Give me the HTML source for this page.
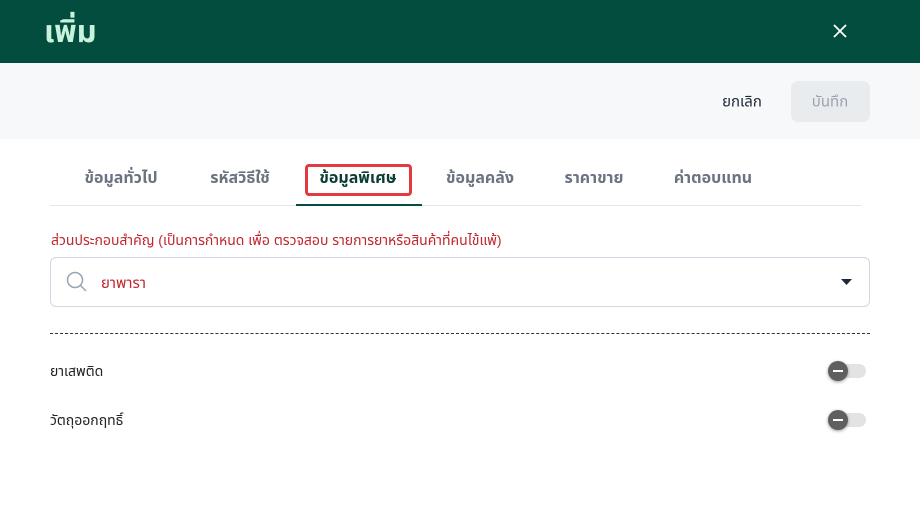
<!DOCTYPE html>
<html><head><meta charset="utf-8"><style>
*{margin:0;padding:0;box-sizing:border-box}
body{width:920px;height:505px;background:#fff;font-family:"Liberation Sans","Noto Sans Thai","Tlwg Typist",sans-serif;position:relative;overflow:hidden}
.a{position:absolute}
.hdr{left:0;top:0;width:920px;height:63px;background:#024d3e}
.title{left:44px;top:14px;font-size:31px;font-weight:bold;color:#c9f2dc;line-height:36px}
.band{left:0;top:63px;width:920px;height:76px;background:#f7f8fa}
.tab{top:169px;font-size:16px;color:#6b7280;font-weight:bold;transform:translateX(-50%);white-space:nowrap;line-height:20px}
.c{transform:translate(-50%,-50%);white-space:nowrap}
.tog{width:36px;height:14px;border-radius:7px;background:#e3e3e3}
.knob{width:20px;height:20px;border-radius:50%;background:#5f5f5f;box-shadow:0 1px 3px rgba(0,0,0,.4)}
.knob:after{content:"";position:absolute;left:5px;top:9px;width:10px;height:2px;background:#fff}
</style></head><body>
<div class="a hdr"></div>
<div class="a title">เพิ่ม</div>
<svg class="a" style="left:832px;top:23px" width="16" height="16" viewBox="0 0 16 16"><path d="M2 2L14 14M14 2L2 14" stroke="#fff" stroke-width="1.8"/></svg>
<div class="a band"></div>
<div class="a c" style="left:742px;top:102px;font-size:15px;color:#1f2937">ยกเลิก</div>
<div class="a" style="left:791px;top:81px;width:79px;height:41px;border-radius:7px;background:#e9ecef"></div>
<div class="a c" style="left:830px;top:102px;font-size:15px;color:#9aa3ad">บันทึก</div>
<div class="a" style="left:50px;top:205px;width:811px;height:1px;background:#e3e6ea"></div>
<div class="a" style="left:296px;top:204px;width:126px;height:2px;background:#024d3e"></div>
<div class="a" style="left:305px;top:164px;width:107px;height:32px;border:3px solid #e33a3f;border-radius:4px"></div>
<div class="a tab" style="left:121px">ข้อมูลทั่วไป</div>
<div class="a tab" style="left:240px">รหัสวิธีใช้</div>
<div class="a tab" style="left:358px;color:#0b3d33">ข้อมูลพิเศษ</div>
<div class="a tab" style="left:480px">ข้อมูลคลัง</div>
<div class="a tab" style="left:594px">ราคาขาย</div>
<div class="a tab" style="left:713px">ค่าตอบแทน</div>
<div class="a" style="left:51px;top:231px;font-size:14px;color:#c0262d;white-space:nowrap">ส่วนประกอบสำคัญ (เป็นการกำหนด เพื่อ ตรวจสอบ รายการยาหรือสินค้าที่คนไข้แพ้)</div>
<div class="a" style="left:50px;top:257px;width:820px;height:50px;border:1px solid #cfd8e3;border-radius:6px"></div>
<svg class="a" style="left:66px;top:271px" width="22" height="22" viewBox="0 0 22 22"><circle cx="9" cy="9" r="7.5" fill="none" stroke="#9aa5b1" stroke-width="1.5"/><path d="M14.5 14.5L20 20" stroke="#9aa5b1" stroke-width="1.5"/></svg>
<div class="a" style="left:101px;top:272px;font-size:15px;color:#c0262d">ยาพารา</div>
<svg class="a" style="left:841px;top:279px" width="11" height="6"><path d="M0 0H11L5.5 6Z" fill="#1f2937"/></svg>
<div class="a" style="left:50px;top:333px;width:820px;border-top:1px dashed #333"></div>
<div class="a" style="left:50px;top:362px;font-size:14px;color:#222">ยาเสพติด</div>
<div class="a" style="left:50px;top:411px;font-size:14px;color:#222">วัตถุออกฤทธิ์</div>
<div class="a tog" style="left:830px;top:364px"></div><div class="a knob" style="left:828px;top:361px"></div>
<div class="a tog" style="left:830px;top:413px"></div><div class="a knob" style="left:828px;top:410px"></div>
</body></html>
